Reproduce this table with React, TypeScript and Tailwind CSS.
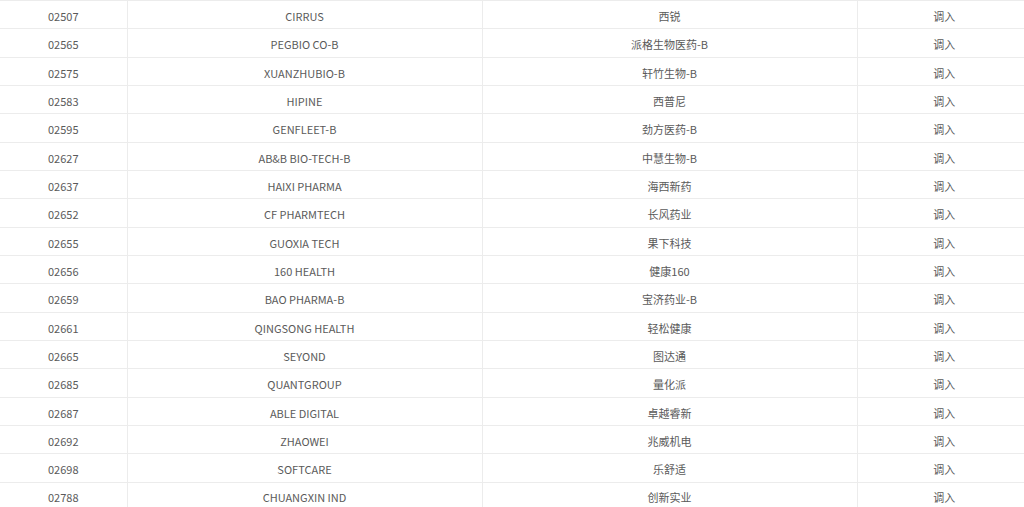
const rows: [string, string, string][] = [
  ['02507', 'CIRRUS', '西锐'],
  ['02565', 'PEGBIO CO-B', '派格生物医药-B'],
  ['02575', 'XUANZHUBIO-B', '轩竹生物-B'],
  ['02583', 'HIPINE', '西普尼'],
  ['02595', 'GENFLEET-B', '劲方医药-B'],
  ['02627', 'AB&B BIO-TECH-B', '中慧生物-B'],
  ['02637', 'HAIXI PHARMA', '海西新药'],
  ['02652', 'CF PHARMTECH', '长风药业'],
  ['02655', 'GUOXIA TECH', '果下科技'],
  ['02656', '160 HEALTH', '健康160'],
  ['02659', 'BAO PHARMA-B', '宝济药业-B'],
  ['02661', 'QINGSONG HEALTH', '轻松健康'],
  ['02665', 'SEYOND', '图达通'],
  ['02685', 'QUANTGROUP', '量化派'],
  ['02687', 'ABLE DIGITAL', '卓越睿新'],
  ['02692', 'ZHAOWEI', '兆威机电'],
  ['02698', 'SOFTCARE', '乐舒适'],
  ['02788', 'CHUANGXIN IND', '创新实业'],
];

export default function App() {
  return (
    <div
      className="w-[1024px] h-[507px] overflow-hidden bg-white text-[11px] text-[#5a5a5a]"
      style={{ fontFamily: '"Noto Sans CJK SC", "Open Sans", sans-serif' }}
    >
      <div className="w-[1031px] border-t border-[#ececec]">
        {rows.map(([code, en, cn]) => (
          <div
            key={code}
            className="grid grid-cols-[127.5px_355px_375px_173.5px] h-[28.33px] border-b border-[#ececec]"
          >
            <div className="flex items-center justify-center pt-[3px] border-r border-[#ececec]">{code}</div>
            <div className="flex items-center justify-center pt-[3px] border-r border-[#ececec]">{en}</div>
            <div className="flex items-center justify-center pt-[3px] border-r border-[#ececec]">{cn}</div>
            <div className="flex items-center justify-center pt-[3px]">调入</div>
          </div>
        ))}
      </div>
    </div>
  );
}
